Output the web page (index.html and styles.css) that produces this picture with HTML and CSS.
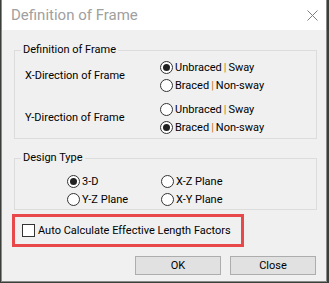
FILE: index.html
```html
<!DOCTYPE html>
<html lang="en">
<head>
  <meta charset="UTF-8" />
  <title>Definition of Frame</title>
  <link rel="stylesheet" href="styles.css">
</head>
<body>
  <div class="window">
    <div class="titlebar">
      <span class="title">Definition of Frame</span>
      <svg class="close" width="11" height="11" viewBox="0 0 11 11">
        <path d="M0.5 0.5 L10.5 10.5 M10.5 0.5 L0.5 10.5" stroke="#808080" stroke-width="1" fill="none" />
      </svg>
    </div>
    <div class="content">
      <fieldset class="group frame-group">
        <legend>Definition of Frame</legend>
        <div class="dir-row">
          <span class="dir-label">X-Direction of Frame</span>
          <div class="options">
            <label class="radio"><span class="dot checked"></span>Unbraced <span class="bar">|</span> Sway</label>
            <label class="radio"><span class="dot"></span>Braced <span class="bar">|</span> Non-sway</label>
          </div>
        </div>
        <div class="dir-row">
          <span class="dir-label">Y-Direction of Frame</span>
          <div class="options">
            <label class="radio"><span class="dot"></span>Unbraced <span class="bar">|</span> Sway</label>
            <label class="radio"><span class="dot checked"></span>Braced <span class="bar">|</span> Non-sway</label>
          </div>
        </div>
      </fieldset>

      <fieldset class="group design-group">
        <legend>Design Type</legend>
        <div class="type-grid">
          <label class="radio"><span class="dot checked"></span>3-D</label>
          <label class="radio"><span class="dot"></span>X-Z Plane</label>
          <label class="radio"><span class="dot"></span>Y-Z Plane</label>
          <label class="radio"><span class="dot"></span>X-Y Plane</label>
        </div>
      </fieldset>

      <div class="highlight">
        <label class="check"><span class="box"></span>Auto Calculate Effective Length Factors</label>
      </div>

      <div class="button-row">
        <button type="button">OK</button>
        <button type="button">Close</button>
      </div>
    </div>
  </div>
</body>
</html>
```

FILE: styles.css
```css
body {
  margin: 0;
  background: #3a3f3a;
  font-family: Roboto, "Noto Sans", sans-serif;
  font-size: 11px;
  color: #000;
}
.window {
  margin-left: 1px;
  width: 326px;
  height: 282px;
  box-sizing: border-box;
  border: 1px solid #8a8a8a;
  border-top: none;
  background: #f0f0f0;
}
.titlebar {
  height: 30px;
  background: #fff;
  display: flex;
  align-items: center;
  justify-content: space-between;
  padding: 0 8px 0 9px;
}
.title {
  font-size: 15px;
  color: #a0a0a0;
}
.content {
  padding: 12px 0 0 12px;
}
.group {
  margin: 0;
  padding: 0;
  width: 303px;
  box-sizing: border-box;
  border: 1px solid #dcdcdc;
}
.group legend {
  margin-left: 6px;
  padding: 0 2px;
  line-height: 16px;
}
.frame-group {
  height: 97px;
}
.dir-row {
  display: flex;
  align-items: center;
  height: 36px;
  margin-bottom: 6px;
}
.dir-label {
  width: 135px;
  padding-left: 10px;
  margin-top: -2px;
}
.options {
  display: flex;
  flex-direction: column;
  gap: 1px;
}
.radio {
  display: flex;
  align-items: center;
  height: 17px;
  white-space: nowrap;
}
.bar {
  color: #c8781c;
  margin: 0 2px;
}
.dot {
  width: 11px;
  height: 11px;
  border: 1px solid #333;
  border-radius: 50%;
  background: #fff;
  margin-right: 2px;
  position: relative;
  flex: none;
}
.dot.checked::after {
  content: "";
  position: absolute;
  left: 2px;
  top: 2px;
  width: 7px;
  height: 7px;
  border-radius: 50%;
  background: #222;
}
.design-group {
  margin-top: 11px;
  height: 60px;
  padding-top: 7px;
}
.type-grid {
  display: grid;
  grid-template-columns: 94px 100px;
  row-gap: 1px;
  padding-left: 52px;
}
.highlight {
  margin-top: 4px;
  width: 232px;
  height: 33px;
  box-sizing: border-box;
  border: 3px solid #e8484a;
  display: flex;
  align-items: center;
  padding-left: 7px;
  position: relative;
  left: -2px;
}
.check {
  display: flex;
  align-items: center;
  white-space: nowrap;
}
.box {
  width: 11px;
  height: 11px;
  border: 1px solid #333;
  background: #fff;
  margin-right: 3px;
  flex: none;
}
.button-row {
  display: flex;
  justify-content: flex-end;
  gap: 9px;
  margin-top: 9px;
  padding-right: 10px;
}
button {
  width: 86px;
  height: 19px;
  border: 1px solid #adadad;
  background: #e1e1e1;
  font-family: Roboto, "Noto Sans", sans-serif;
  font-size: 11px;
  padding: 0;
  color: #000;
}
```
